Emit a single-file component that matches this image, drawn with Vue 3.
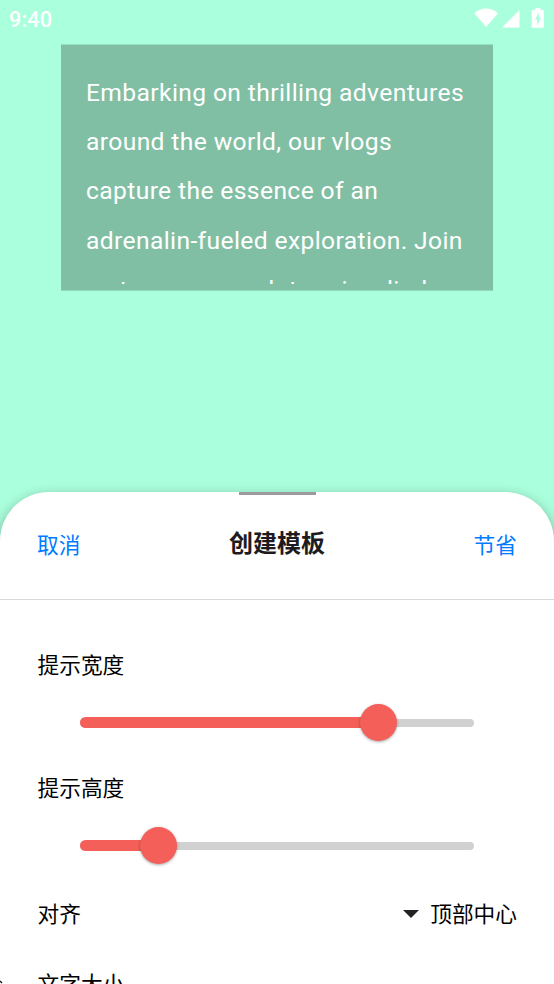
<script setup>
const lines = [
  'Embarking on thrilling adventures',
  'around the world, our vlogs',
  'capture the essence of an',
  'adrenalin-fueled exploration. Join',
  'us to cross rough terrain, climb',
]
const sliders = [
  { label: '提示宽度', value: 298.5 / 394 * 100 },
  { label: '提示高度', value: 78 / 394 * 100 },
]
</script>

<template>
  <main class="screen">
    <header class="status">
      <span class="time">9:40</span>
      <svg class="status-icons" width="72" height="24" viewBox="0 0 72 24" fill="#fff">
        <path d="M0.3 5.2C7 -1.1 17.3 -1.1 24 5.2L12.2 19Z" />
        <path d="M28 19.5L45.5 2V19.5Z" />
        <path fill-rule="evenodd" d="M61.5 0H66.5V2H69Q69.8 2 69.8 3V18.7Q69.8 19.7 68.8 19.7H58.7Q57.7 19.7 57.7 18.7V3Q57.7 2 58.7 2H61.5ZM64.8 4.6L61 11.6H63.2V17.8L67 9.4H64.8Z" />
      </svg>
    </header>
    <section class="preview">
      <div class="script">
        <p v-for="line in lines" :key="line">{{ line }}</p>
      </div>
    </section>
    <section class="sheet">
      <div class="handle"></div>
      <div class="toolbar">
        <button>取消</button>
        <h1>创建模板</h1>
        <button>节省</button>
      </div>
      <div class="settings">
        <div v-for="s in sliders" :key="s.label" class="setting">
          <label>{{ s.label }}</label>
          <div class="track">
            <div class="fill" :style="{ width: s.value + '%' }"></div>
            <div class="thumb" :style="{ left: s.value + '%' }"></div>
          </div>
        </div>
        <div class="row">
          <span>对齐</span>
          <span class="select">
            <svg width="16" height="8" viewBox="0 0 16 8"><path d="M0 0H16L8 8Z" fill="#222" /></svg>
            顶部中心
          </span>
        </div>
        <div class="row last"><span>文字大小</span></div>
      </div>
      <svg class="edge" width="3" height="4" viewBox="0 0 3 4"><path d="M0 1L2 3" stroke="#111" stroke-width="1.3" fill="none" /></svg>
    </section>
  </main>
</template>

<style>
body { margin: 0; overflow: hidden; }
</style>

<style scoped>
.screen {
  width: 554px;
  height: 984px;
  overflow: hidden;
  display: flex;
  flex-direction: column;
  background: #aaffdc;
  font-family: Roboto, "Noto Sans CJK SC", sans-serif;
}
.status {
  height: 45px;
  flex: none;
  box-sizing: border-box;
  padding: 8px 8px 0 9px;
  display: flex;
  justify-content: space-between;
  color: #fff;
}
.time { font-size: 21.6px; font-weight: 500; line-height: 24px; letter-spacing: .2px; }
.status-icons { margin-top: .4px; }
.preview {
  width: 432px;
  height: 245px;
  flex: none;
  box-sizing: border-box;
  margin: 0 auto;
  padding: 23px 0 6px 25px;
  background: #81bfa5;
  box-shadow: 0 -1px rgba(129, 191, 165, .5), 0 1px rgba(129, 191, 165, .6);
}
.script { height: 216px; overflow: hidden; color: #fff; }
.script p {
  margin: 0;
  font-size: 24.62px;
  line-height: 49.24px;
  letter-spacing: .385px;
  white-space: nowrap;
}
.sheet {
  position: relative;
  flex: none;
  height: 492px;
  margin-top: 202px;
  overflow: hidden;
  background: #fff;
  border-radius: 49px 49px 0 0;
  box-shadow: 0 5px 14px rgba(0, 0, 0, .36);
}
.handle { width: 77px; height: 3px; margin: 0 auto; background: #9d999d; }
.toolbar {
  height: 104px;
  padding: 0 37px;
  display: flex;
  align-items: center;
  justify-content: space-between;
  border-bottom: 1px solid #d9d9d9;
}
.toolbar button {
  padding: 0;
  margin-bottom: 6px;
  border: 0;
  background: none;
  color: #007bff;
  font: 21.7px/30px "Noto Sans CJK SC", sans-serif;
}
.toolbar h1 { margin: 0 0 6px; color: #1d1b20; font-size: 24px; line-height: 36px; font-weight: 700; }
.settings { padding: 48px 37px 0 37.5px; color: #000; font: 21.7px/32px "Noto Sans CJK SC", sans-serif; }
.setting { height: 123px; }
.setting label { display: block; height: 32px; }
.track {
  position: relative;
  height: 8px;
  margin: 38.5px 43px 0 42.5px;
  border-radius: 4px;
  background: #d1d1d1;
}
.fill { position: relative; top: -1.5px; height: 11px; border-radius: 6px; background: #f55f5a; }
.thumb {
  position: absolute;
  top: -14.5px;
  width: 37px;
  height: 37px;
  margin-left: -18.5px;
  border-radius: 50%;
  background: #f55f5a;
  box-shadow: 0 1px 3px rgba(0, 0, 0, .35);
}
.row { height: 69px; padding-top: 3px; box-sizing: border-box; display: flex; justify-content: space-between; }
.row.last { padding-top: 4px; }
.select { display: flex; align-items: center; height: 32px; gap: 11px; }
.select svg { margin-top: 1px; }
.edge { position: absolute; left: 0; bottom: 0; }
</style>
